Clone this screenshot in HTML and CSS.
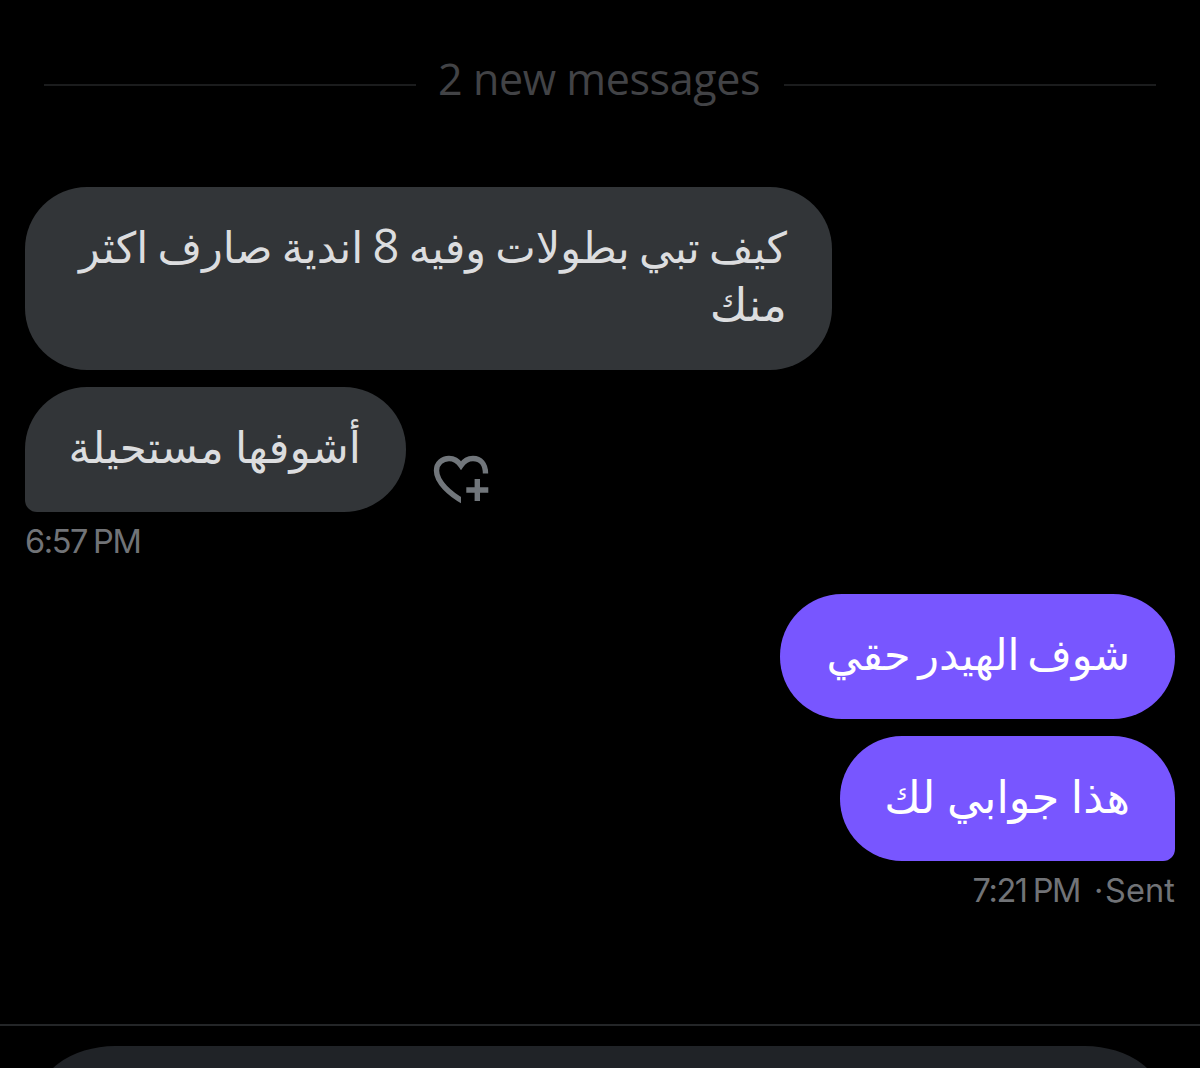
FILE: index.html
```html
<!DOCTYPE html>
<html lang="en">
<head>
    <meta charset="UTF-8">
    <meta name="viewport" content="width=device-width, initial-scale=1.0">
    <title>Messages</title>
    <link rel="stylesheet" href="styles.css">
</head>
<body>
    <main class="chat">
        <div class="divider"><span class="divider-text">2 new messages</span></div>

        <div class="group received">
            <div class="bubble bubble-long" dir="rtl" lang="ar">
                <p class="line text-1">كيف تبي بطولات وفيه <span class="digit">8</span> اندية صارف اكثر</p>
                <p class="line text-2">منك</p>
            </div>
            <div class="row">
                <div class="bubble bubble-tail bubble-short" dir="rtl" lang="ar">
                    <p class="line text-3">أشوفها مستحيلة</p>
                </div>
                <svg class="react" viewBox="11 12 60 54" width="60" height="54" aria-label="Add reaction">
                    <clipPath id="heart-cut">
                        <path d="M11 12 H71 V40 H41 V66 H11 Z"/>
                    </clipPath>
                    <path clip-path="url(#heart-cut)" d="M44 61.800 C30 54 16.500 42 16.500 30.500 C16.500 23 22.500 18.500 29 18.500 C34.500 18.500 38 21 41 25.500 C44 21 48 18.500 53 18.500 C60.500 18.500 65.500 24 65.500 33.500" fill="none" stroke="#71767b" stroke-width="5.400"/>
                    <path d="M57.300 39 V61 M46.300 50 H68.300" fill="none" stroke="#71767b" stroke-width="5.400"/>
                </svg>
            </div>
            <div class="meta"><span>6:57</span><span>PM</span></div>
        </div>

        <div class="group sent">
            <div class="bubble bubble-header" dir="rtl" lang="ar">
                <p class="line text-4">شوف الهيدر حقي</p>
            </div>
            <div class="bubble bubble-tail bubble-reply" dir="rtl" lang="ar">
                <p class="line text-5">هذا جوابي لك</p>
            </div>
            <div class="meta"><span>7:21</span><span>PM</span><span class="dot">·</span><span class="status">Sent</span></div>
        </div>
    </main>
    <footer class="composer">
        <div class="composer-box"></div>
    </footer>
</body>
</html>
```

FILE: styles.css
```css
* {
    box-sizing: border-box;
}

body {
    margin: 0;
    height: 100vh;
    display: flex;
    flex-direction: column;
    overflow: hidden;
    background: #000;
    font-family: Inter, "Liberation Sans", sans-serif;
}

.chat {
    flex: 1;
    padding: 54px 25px 0;
}

.divider {
    display: flex;
    align-items: center;
    gap: 24px;
    height: 62px;
    margin: 0 19px;
    color: #424346;
}

.divider::before,
.divider::after {
    content: "";
    flex: 1;
    height: 2px;
    background: #1b1c1d;
}

.divider-text {
    width: 320px;
    margin-top: -12px;
    font-family: "Open Sans", sans-serif;
    font-size: 43px;
    line-height: 52px;
    letter-spacing: -0.4px;
    text-indent: -2px;
    white-space: nowrap;
}

.group {
    display: flex;
    flex-direction: column;
}

.received {
    align-items: flex-start;
    margin-top: 71px;
}

.sent {
    align-items: flex-end;
    margin-top: 35px;
}

.row {
    display: flex;
    align-items: flex-end;
    gap: 25px;
    margin-top: 17px;
}

.row .react {
    margin-bottom: 6px;
}

.bubble {
    padding: 31px 45px;
    border-radius: 62px;
    font-family: "Open Sans", "DejaVu Sans", sans-serif;
}

.received .bubble {
    background: #323538;
    color: #dcdddf;
}

.sent .bubble {
    height: 125px;
    background: #7856ff;
    color: #fff;
}

.received .bubble-tail {
    border-bottom-left-radius: 12px;
}

.sent .bubble-tail {
    margin-top: 17px;
    border-bottom-right-radius: 12px;
}

.bubble-long {
    width: 807px;
    height: 183px;
}

.bubble-short {
    width: 381px;
    height: 125px;
}

.bubble-header {
    width: 395px;
}

.bubble-reply {
    width: 335px;
}

.line {
    margin: 0;
    font-size: 43px;
    line-height: 57px;
    white-space: nowrap;
}

.text-1 {
    word-spacing: -1.9px;
}

.digit {
    font-size: 47px;
    line-height: 1;
}

.text-2 {
    font-size: 46px;
}

.text-3 {
    font-size: 43.8px;
}

.text-4 {
    word-spacing: -3.5px;
}

.text-5 {
    font-size: 44.5px;
}

.meta {
    display: flex;
    gap: 6px;
    height: 47px;
    padding-top: 9px;
    font-size: 32.5px;
    line-height: 42px;
    letter-spacing: -1.4px;
    color: #717377;
}

.dot {
    margin: 0 -3px 0 8px;
}

.status {
    letter-spacing: 0.1px;
}

.composer {
    height: 44px;
    padding: 20px 35px 0;
    border-top: 2px solid #242628;
    overflow: hidden;
}

.composer-box {
    height: 22px;
    overflow: hidden;
}

.composer-box::before {
    content: "";
    display: block;
    height: 120px;
    border-radius: 80px / 60px;
    background: #202327;
}
```
